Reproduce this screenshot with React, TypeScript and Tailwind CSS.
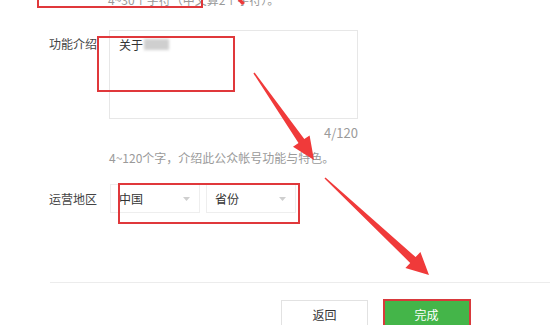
import React from "react";

const font = { fontFamily: '"Noto Sans CJK SC", "Noto Sans", sans-serif' };

function Chevron() {
  return (
    <svg width="7" height="4" viewBox="0 0 7 4" className="shrink-0">
      <path d="M0 0 L3.5 4 L7 0 Z" fill="#cfcfcf" />
    </svg>
  );
}

function Select({ value, width }: { value: string; width: string }) {
  return (
    <div className={`${width} h-[29px] border border-[#eeeeee] flex items-center justify-between pl-[8px] pr-[9px] text-[12px] text-[#333]`}>
      <span>{value}</span>
      <Chevron />
    </div>
  );
}

// annotation layer: red boxes + arrows drawn over the form
function Annotations() {
  return (
    <>
      <div className="absolute left-[37px] top-[-12px] w-[166px] h-[20px] border-2 border-[#e0383b]" />
      <div className="absolute left-[97px] top-[36px] w-[138px] h-[56px] border-2 border-[#e0383b]" />
      <div className="absolute left-[118px] top-[183px] w-[182px] h-[41px] border-2 border-[#e0383b]" />
      <div className="absolute left-[383px] top-[299px] w-[88px] h-[32px] border-2 border-[#d8393b]" />
      <svg className="absolute inset-0 pointer-events-none" width="550" height="325">
        <polygon points="236,-6 245,3 242,5 234,-4" fill="#ee3a3a" />
        <polygon
          points="253.4,73.4 298.5,143 293,146.8 314,160 309.6,135.4 304.3,139 254.6,72.6"
          fill="#f03a3a"
        />
        <polygon
          points="324.5,178.6 410.2,262.9 405.4,268 429,275 420.4,252 415.6,257.1 325.5,177.4"
          fill="#f03a3a"
        />
      </svg>
    </>
  );
}

export default function App() {
  return (
    <div className="relative w-[550px] h-[325px] overflow-hidden bg-white" style={font}>
      <div className="flex flex-col">
        {/* name hint, cut off at top */}
        <div className="-mt-[7px] h-[37px] pl-[108px] text-[12px] leading-[14px] text-[#999]">
          4~30个字符（中文算2个字符）。
        </div>

        {/* intro */}
        <div className="flex">
          <div className="w-[109px] pr-[12px] pt-[6px] text-right text-[12px] leading-[16px] text-[#444]">
            功能介绍
          </div>
          <div className="flex flex-col w-[249px]">
            <div className="h-[89px] border border-[#e7e7e7] pl-[9px] pt-[6px] text-[12px] leading-[16px] text-[#333] flex items-start">
              <span>关于</span>
              <span className="inline-block mt-[2px] ml-[1px] w-[25px] h-[11px] bg-[#cfcfcf] blur-[1.5px]" />
            </div>
            <div className="mt-[6px] text-right text-[13px] leading-[16px] text-[#9a9a9a]">4/120</div>
          </div>
        </div>
        <div className="mt-[9px] pl-[109px] text-[12px] leading-[16px] text-[#9a9a9a]">
          4~120个字，介绍此公众帐号功能与特色。
        </div>

        {/* region */}
        <div className="flex items-center mt-[18px]">
          <div className="w-[110px] pr-[13px] text-right text-[12px] text-[#444]">运营地区</div>
          <div className="flex gap-[6px]">
            <Select value="中国" width="w-[90px]" />
            <Select value="省份" width="w-[90px]" />
          </div>
        </div>

        <div className="mt-[69px] ml-[50px] h-px bg-[#ececec]" />

        {/* footer buttons */}
        <div className="flex gap-[15px] pl-[281px] mt-[17px]">
          <div className="w-[87px] h-[30px] border border-[#e2e2e2] bg-white flex items-center justify-center text-[12px] text-[#333]">
            返回
          </div>
          <div className="w-[87px] h-[30px] bg-[#44b549] flex items-center justify-center text-[12px] text-white">
            完成
          </div>
        </div>
      </div>
      <Annotations />
    </div>
  );
}
